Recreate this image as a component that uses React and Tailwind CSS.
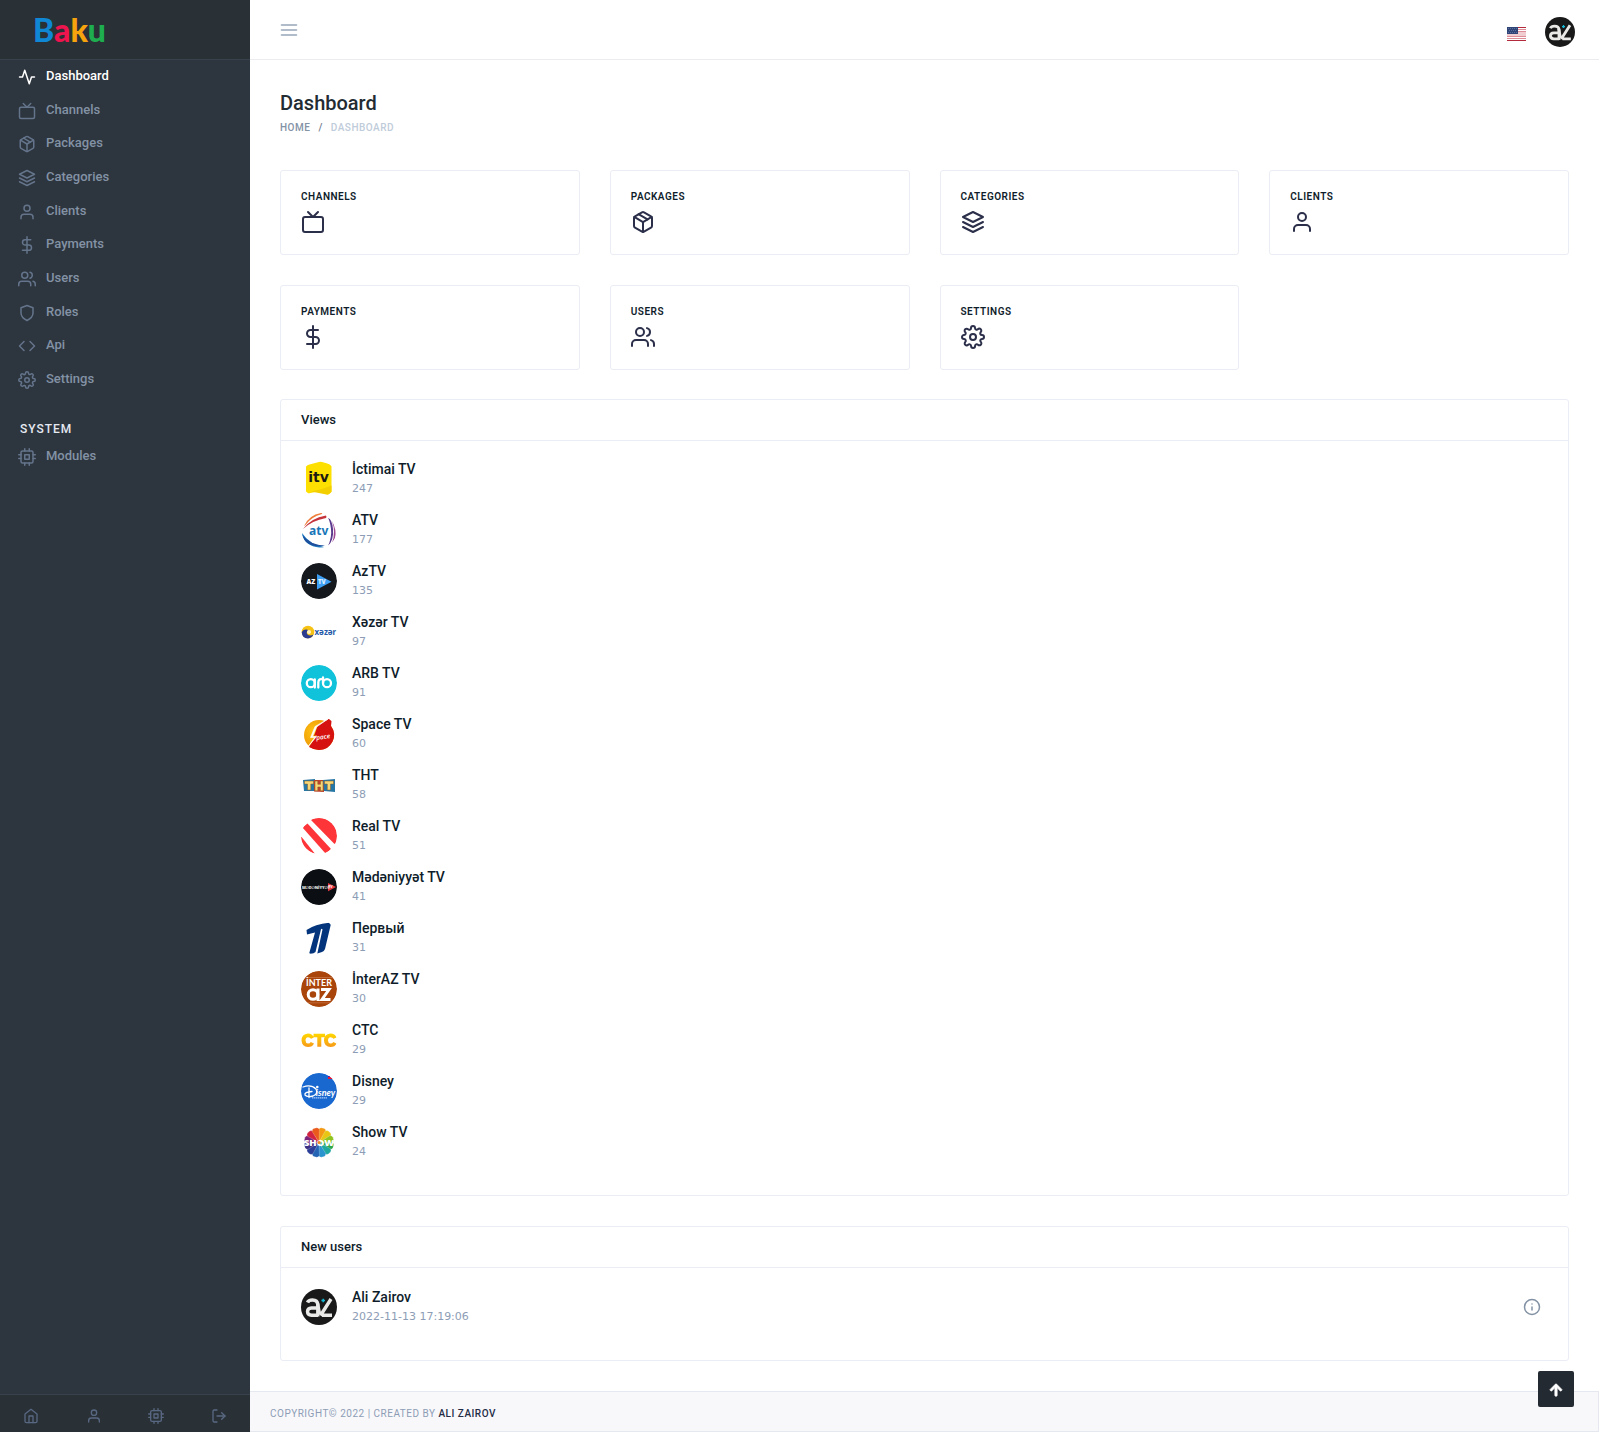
import React from "react";
import {
  FiActivity,
  FiTv,
  FiPackage,
  FiLayers,
  FiUser,
  FiDollarSign,
  FiUsers,
  FiShield,
  FiCode,
  FiSettings,
  FiCpu,
  FiHome,
  FiLogOut,
  FiMenu,
  FiInfo,
} from "react-icons/fi";
import { FaArrowUp } from "react-icons/fa";

const navItems = [
  { label: "Dashboard", icon: FiActivity, active: true },
  { label: "Channels", icon: FiTv },
  { label: "Packages", icon: FiPackage },
  { label: "Categories", icon: FiLayers },
  { label: "Clients", icon: FiUser },
  { label: "Payments", icon: FiDollarSign },
  { label: "Users", icon: FiUsers },
  { label: "Roles", icon: FiShield },
  { label: "Api", icon: FiCode },
  { label: "Settings", icon: FiSettings },
];

const quickLinks = [
  { label: "Home", icon: FiHome },
  { label: "Profile", icon: FiUser },
  { label: "Modules", icon: FiCpu },
  { label: "Log out", icon: FiLogOut },
];

const tiles = [
  { label: "Channels", icon: FiTv },
  { label: "Packages", icon: FiPackage },
  { label: "Categories", icon: FiLayers },
  { label: "Clients", icon: FiUser },
  { label: "Payments", icon: FiDollarSign },
  { label: "Users", icon: FiUsers },
  { label: "Settings", icon: FiSettings },
];

function Logo({ children }) {
  return (
    <svg viewBox="0 0 36 36" className="size-9 shrink-0 rounded-full" aria-hidden="true">
      {children}
    </svg>
  );
}

const ItvLogo = () => (
  <Logo>
    <path d="M5 5.500Q5 4.500 6.500 4L18 .9Q19.500 .6 21 1L29 3.300Q30.500 3.800 30.500 5.300V32Q30.500 34.500 28 34L17 30.500L7 32.500Q5 32.800 5 31Z" fill="#fde000" />
    <path d="M10 30.500Q20 29 30.500 24.500V32Q30.500 34.500 28 34Z" fill="#f3cf00" />
    <text x="17.500" y="21" textAnchor="middle" fontFamily="DejaVu Sans" fontWeight="700" fontSize="14" fill="#1c1a12">itv</text>
  </Logo>
);

const AtvLogo = () => (
  <Logo>
    <path d="M3 14Q8 3 20 1Q22 1 21 2Q10 5 4.500 13Z" fill="#ee7d3b" />
    <path d="M2 17Q10 6 25 3.500Q26 5 25 6Q11 8.500 2 17Z" fill="#c5343d" />
    <path d="M27 6Q31 7 32 17Q33 28 27 34Q31 25 30 17Q29 9 27 6Z" fill="#5b3a8e" />
    <path d="M31 9Q36 18 34 26Q32 30 31 31Q35 20 31 9Z" fill="#a14a94" />
    <path d="M1 21Q2 32 15 35Q22 36 23 35Q9 33 1 21Z" fill="#1f7fc4" />
    <path d="M1.500 23Q9 33 24 33.500Q12 36.500 4 29Z" fill="#1d4f9c" />
    <text x="17.700" y="22.500" textAnchor="middle" fontFamily="Noto Sans" fontWeight="700" fontSize="12" fill="#1976b8">atv</text>
  </Logo>
);

const AzTvLogo = () => (
  <Logo>
    <circle cx="18" cy="18" r="18" fill="#15181d" />
    <path d="M16 11L30.500 18.700L16 26.500Z" fill="#3da0f5" />
    <text x="5.500" y="21" fontFamily="Open Sans" fontWeight="800" fontSize="6.500" fill="#fff">AZ</text>
    <text x="17" y="21" fontFamily="Open Sans" fontWeight="800" fontSize="6" fill="#d9efff">TV</text>
  </Logo>
);

const XezerLogo = () => (
  <Logo>
    <circle cx="7" cy="18" r="6.300" fill="#f6c214" />
    <path d="M.7 18Q1 24.300 7 24.500Q11 24 12.500 20.500Q9 22.500 6.500 20.500Q4.500 18 7.500 16Q3 14.500 .7 18Z" fill="#2b3c90" />
    <circle cx="8" cy="18" r="2" fill="#fff3c4" />
    <text x="13.500" y="20.500" fontFamily="Noto Sans" fontWeight="700" fontSize="8" fill="#245aa8">xəzər</text>
  </Logo>
);

const ArbLogo = () => (
  <Logo>
    <circle cx="18" cy="18" r="18" fill="#10c3da" />
    <g fill="none" stroke="#fff" strokeWidth="2.300" strokeLinecap="round">
      <circle cx="9.800" cy="18.200" r="4" />
      <path d="M13.800 14.500V22.500M17.300 22.500V18Q17.300 14 20.300 14.200" />
      <circle cx="26" cy="18.200" r="4" />
      <path d="M22 18V12.500" />
    </g>
  </Logo>
);

const SpaceLogo = () => (
  <Logo>
    <defs>
      <radialGradient id="space-sun" cx=".35" cy=".4" r=".7">
        <stop offset="0" stopColor="#ffc715" />
        <stop offset="1" stopColor="#e98a00" />
      </radialGradient>
    </defs>
    <circle cx="18" cy="19" r="15" fill="url(#space-sun)" />
    <path d="M31 1L17 9L13 20L16 19L8 31Q13 34 18 34A15 15 0 0 0 30 10Z" fill="#d5120f" />
    <path d="M27 3L15.500 11L11.500 20.500H15.500L6 32L13.800 21.500H9.500L14 10.500Z" fill="#fff" stroke="#fff" strokeWidth=".6" />
    <text x="15.500" y="24" fontFamily="Open Sans" fontStyle="italic" fontWeight="600" fontSize="6.500" fill="#fff" transform="rotate(-8 16 24)">pace</text>
  </Logo>
);

const ThtLogo = () => (
  <Logo>
    <path d="M2 13L14 12V24L3 24Z" fill="#2677a5" />
    <path d="M13 13L23 13V25L13 24.500Z" fill="#c0432e" />
    <path d="M22 13L34 12V25L23 24Z" fill="#2677a5" />
    <g fill="#f5d778" stroke="#8a5a22" strokeWidth=".5">
      <path d="M3.500 14H12.500V17H9.800V23H6.500V17H3.500Z" />
      <path d="M14 14H16.800V17.300H19.500V14H22V23.800H19.500V20H16.800V23.800H14Z" />
      <path d="M23.500 14H32.500V17H29.500V23H26.300V17H23.500Z" />
    </g>
  </Logo>
);

const RealLogo = () => (
  <Logo>
    <defs>
      <clipPath id="real-disc"><circle cx="18" cy="18" r="18" /></clipPath>
    </defs>
    <g clipPath="url(#real-disc)" fill="#fd3438">
      <path d="M8 0H36V27L33 25.500L10 2Z" />
      <path d="M1.500 9.500L6.500 5.500L30 31L25 36Z" />
      <path d="M-1 17L15 37H-1Z" />
    </g>
  </Logo>
);

const MedeniyyetLogo = () => (
  <Logo>
    <circle cx="18" cy="18" r="18" fill="#0b0f14" />
    <path d="M27 14L35 18L27 22.200Z" fill="#e8383f" />
    <text x="1" y="19.500" fontFamily="Open Sans" fontWeight="800" fontSize="4" fill="#e6e6e6">MƏDƏNİYYƏT</text>
    <text x="27.300" y="19.200" fontFamily="Open Sans" fontWeight="700" fontSize="3.500" fill="#fff">TV</text>
  </Logo>
);

const PerviyLogo = () => (
  <Logo>
    <path d="M5.500 10Q14 4 28 2.700Q30 2.600 29.700 5L24 29Q23 31.500 21 32L16.300 33.500L21.500 9.500L20.800 8.800L20 9.300L14.500 32L12.500 33.300L8 34L14 12.500L6 14.500Z" fill="#04357c" />
  </Logo>
);

const InterAzLogo = () => (
  <Logo>
    <circle cx="18" cy="18" r="18" fill="#a9440a" />
    <path d="M4 6.500H32M5 31.800H31" stroke="#c97a4c" strokeWidth=".7" />
    <text x="18" y="14.500" textAnchor="middle" fontFamily="Lato" fontWeight="700" fontSize="9" fill="#fff">İNTER</text>
    <g fill="none" stroke="#fff" strokeWidth="3">
      <circle cx="12" cy="23.500" r="4.800" />
      <path d="M17 17.500V30M20 18.500H28L21 28.500H29.500" />
    </g>
  </Logo>
);

const CtcLogo = () => (
  <Logo>
    <defs>
      <linearGradient id="ctc-gold" x1="0" y1="0" x2="0" y2="1">
        <stop offset="0" stopColor="#ffd800" />
        <stop offset="1" stopColor="#f79a1a" />
      </linearGradient>
    </defs>
    <path fill="url(#ctc-gold)" d="M13 15.500Q11 11.500 7 11.500Q.5 12 .5 18.500Q.8 25 7 25Q11.500 25 13 21.500L9.800 20Q9 21.500 7 21.500Q4.500 21 4.500 18.500Q4.500 15.500 7 15.200Q9 15.200 10 16.800ZM12.500 11.800H24V15.300H20.300V24.700H16.300V15.300H12.500ZM35.500 15.500Q34 11.500 29.500 11.500Q23 12 23 18.500Q23.300 25 29.500 25Q34 25 35.500 21.500L32.300 20Q31.500 21.500 29.500 21.500Q27 21 27 18.500Q27 15.500 29.500 15.200Q31.500 15.200 32.500 16.800Z" />
  </Logo>
);

const DisneyLogo = () => (
  <Logo>
    <circle cx="18" cy="18" r="18" fill="#1968cf" />
    <path d="M27 3H30L32 6H27Z" fill="#f0142f" />
    <path d="M27 3H29V4H27Z" fill="#2b1fd6" />
    <path d="M2 14Q10 11 15 16Q17.500 21 12 23Q6 24.500 4 22Q3 19 11 18.500M8 15V24.500" fill="none" stroke="#fff" strokeWidth="1.300" strokeLinecap="round" />
    <circle cx="16.300" cy="14" r="1.300" fill="#fff" />
    <text x="14.800" y="22.500" fontFamily="Lato" fontStyle="italic" fontWeight="700" fontSize="9" fill="#fff">isney</text>
    <path d="M11 24.900H26" stroke="#cfe1ff" strokeWidth="1" strokeDasharray="1.500 .5" />
  </Logo>
);

const petals = [
  "#f39a12", "#e9c614", "#8fc31f", "#2fa84a", "#1ea8a0", "#2a94cf",
  "#2464b4", "#2b3f98", "#3c2f86", "#7a2379", "#d32340", "#ea5a1c",
];

const ShowLogo = () => (
  <Logo>
    {petals.map((color, i) => (
      <path
        key={color}
        d="M18 18.500L14.200 6Q14.800 4 16.500 3.700H19.500Q21.200 4 21.800 6Z"
        fill={color}
        stroke="#fff"
        strokeWidth=".2"
        transform={`rotate(${i * 30 + 15} 18 18.500)`}
      />
    ))}
    <text x="18" y="22" textAnchor="middle" fontFamily="Open Sans" fontWeight="800" fontSize="9.500" fill="#fff">SHOW</text>
    <circle cx="18" cy="18.500" r="1.500" fill="#f08a1c" />
  </Logo>
);

function ProfilePicture({ className }) {
  return (
    <svg viewBox="0 0 36 36" className={className} role="img" aria-label="Ali Zairov">
      <circle cx="18" cy="18" r="18" fill="#191919" />
      <g fill="none" stroke="#e9e9e7" strokeWidth="3.400">
        <path d="M6.500 13.500Q7.500 11 11.500 11Q16.500 11 16.800 15.500V27.500" />
        <path d="M17 19H10.500Q6.500 19.200 6.500 22.700Q6.600 26 10.500 26.200H17" />
        <path d="M30 10L19.500 26.500M21 26.300H31M16.500 14L18.500 25" />
      </g>
      <path d="M22.200 9.700V13.300M20.400 11.500H24" stroke="#14b9d6" strokeWidth="1.500" />
    </svg>
  );
}

function UsFlag() {
  return (
    <svg viewBox="0 0 19 14" className="h-3.5 w-[19px]" role="img" aria-label="English">
      <path fill="#fff" d="M0 0H19V14H0Z" />
      <path fill="#b22a3c" d="M11 0H19V1H11ZM0 13H19V14H0Z" />
      <path fill="#dd8e98" d="M11 2H19V3H11ZM11 4H19V5H11ZM0 9H19V10H0ZM0 11H19V12H0Z" />
      <path fill="#f0cdd1" d="M11 5H19V9H0V7H11Z" />
      <path fill="#2f4578" d="M0 0H11V7H0Z" />
      <path stroke="#5b6f9d" strokeWidth="1" strokeDasharray="1 1" d="M1 1.500H10M2 3.500H10M1 5.500H10" />
    </svg>
  );
}

const channels = [
  { name: "İctimai TV", views: 247, logo: ItvLogo },
  { name: "ATV", views: 177, logo: AtvLogo },
  { name: "AzTV", views: 135, logo: AzTvLogo },
  { name: "Xəzər TV", views: 97, logo: XezerLogo },
  { name: "ARB TV", views: 91, logo: ArbLogo },
  { name: "Space TV", views: 60, logo: SpaceLogo },
  { name: "ТНТ", views: 58, logo: ThtLogo },
  { name: "Real TV", views: 51, logo: RealLogo },
  { name: "Mədəniyyət TV", views: 41, logo: MedeniyyetLogo },
  { name: "Первый", views: 31, logo: PerviyLogo },
  { name: "İnterAZ TV", views: 30, logo: InterAzLogo },
  { name: "СТС", views: 29, logo: CtcLogo },
  { name: "Disney", views: 29, logo: DisneyLogo },
  { name: "Show TV", views: 24, logo: ShowLogo },
];

function NavLink({ label, icon: Icon, active }) {
  return (
    <a
      href="#"
      className={`flex items-center gap-2.5 pb-0.5 pl-[18px] text-[13px] leading-5 font-medium ${active ? "text-white" : "text-[#8392a5]"}`}
    >
      <Icon className={`mt-0.5 size-[18px] shrink-0 ${active ? "text-white" : "text-[#64748b]"}`} />
      {label}
    </a>
  );
}

function Sidebar() {
  return (
    <aside className="flex w-[250px] shrink-0 flex-col bg-[#2d353e]">
      <div className="flex h-[60px] items-center border-b border-[#37424c] bg-[#293036] pl-[33px]">
        <a href="#" className="font-[Lato,sans-serif] text-[32px] leading-10 font-black">
          <span className="text-[#0f87d4]">B</span>
          <span className="text-[#ee144e]">a</span>
          <span className="text-[#f7a30e]">k</span>
          <span className="text-[#1fae4f]">u</span>
        </a>
      </div>
      <nav aria-label="Main" className="flex grow flex-col">
        <ul className="grid h-[337px] grid-rows-10">
          {navItems.map((item) => (
            <li key={item.label} className="grid">
              <NavLink {...item} />
            </li>
          ))}
        </ul>
        <h2 className="mt-[22px] pl-5 text-xs leading-5 font-medium tracking-[1px] text-[#e5e9f2] uppercase">System</h2>
        <ul className="mt-[7px]">
          <li className="grid">
            <NavLink label="Modules" icon={FiCpu} />
          </li>
        </ul>
      </nav>
      <div className="grid h-[38px] grid-cols-4 border-t border-[#37424c] bg-[#293036]">
        {quickLinks.map(({ label, icon: Icon }) => (
          <a key={label} href="#" aria-label={label} className="flex items-center justify-center pt-1 text-[#596882]">
            <Icon className="size-4" />
          </a>
        ))}
      </div>
    </aside>
  );
}

function Panel({ title, className, children }) {
  return (
    <section className={`rounded-[3px] border border-[#ebedf5] pb-[35px] ${className}`}>
      <h2 className="border-b border-[#ebedf5] px-5 py-2.5 text-[13px] leading-5 font-medium text-[#0f1d2b]">{title}</h2>
      {children}
    </section>
  );
}

function Person({ name, detail, picture, action }) {
  return (
    <li className="flex items-center gap-[15px]">
      {picture}
      <div className="grow">
        <p className="text-sm leading-4 font-medium text-[#0f1d2b]">{name}</p>
        <p className="mt-1 font-['DejaVu_Sans',sans-serif] text-[11px] leading-4 text-[#8d9db5]">{detail}</p>
      </div>
      {action}
    </li>
  );
}

export default function App() {
  return (
    <div className="flex min-h-screen bg-white font-[Roboto,sans-serif] text-[#0f1d2b]">
      <Sidebar />
      <div className="flex min-w-0 grow flex-col">
        <header className="flex h-[60px] items-center border-b border-[#ebecf0] pr-6 pl-[29px]">
          <button type="button" aria-label="Toggle menu" className="text-[#97a7b8]">
            <FiMenu className="size-5" />
          </button>
          <button type="button" aria-label="Language" className="mt-2 ml-auto">
            <UsFlag />
          </button>
          <button type="button" aria-label="Account" className="mt-1 ml-[19px]">
            <ProfilePicture className="size-[30px]" />
          </button>
        </header>

        <main className="grow px-[30px] pt-[30px] pb-[30px]">
          <h1 className="text-xl leading-[26px] font-medium text-[#232b33]">Dashboard</h1>
          <nav aria-label="Breadcrumb" className="mt-1">
            <ol className="flex gap-2 text-[10px] leading-4 font-medium tracking-[.5px] uppercase">
              <li><a href="#" className="text-[#8392a5]">Home</a></li>
              <li aria-hidden="true" className="text-[#707b8c]">/</li>
              <li className="text-[#c0ccda]">Dashboard</li>
            </ol>
          </nav>

          <div className="mt-[34px] grid grid-cols-4 gap-[30px]">
            {tiles.map(({ label, icon: Icon }) => (
              <a key={label} href="#" className="rounded-[3px] border border-[#ebedf5] px-5 pt-[18px] pb-5">
                <h2 className="text-[10px] leading-4 font-semibold tracking-[.5px] uppercase">{label}</h2>
                <Icon className="mt-[5px] size-6 text-[#2b2f49]" />
              </a>
            ))}
          </div>

          <Panel title="Views" className="mt-[29px]">
            <ul className="flex flex-col gap-[15px] px-5 pt-5">
              {channels.map(({ name, views, logo: ChannelLogo }) => (
                <Person key={name} name={name} detail={views} picture={<ChannelLogo />} />
              ))}
            </ul>
          </Panel>

          <Panel title="New users" className="mt-[30px]">
            <ul className="px-5 pt-[21px]">
              <Person
                name="Ali Zairov"
                detail="2022-11-13 17:19:06"
                picture={<ProfilePicture className="size-9 shrink-0" />}
                action={
                  <a href="#" aria-label="User details" className="mr-[7px] text-[#8392a5]">
                    <FiInfo className="size-[18px]" />
                  </a>
                }
              />
            </ul>
          </Panel>
        </main>

        <footer className="border border-l-0 border-[#e5e8ef] bg-[#f8f8fb] px-5 pt-3.5 pb-2.5 text-[10px] leading-[15px] tracking-[.5px] text-[#8d9db5] uppercase">
          Copyright© 2022 | Created by{" "}
          <a href="#" className="font-medium text-[#232b45]">Ali Zairov</a>
        </footer>
      </div>

      <button
        type="button"
        aria-label="Back to top"
        className="fixed right-[25px] bottom-[25px] flex size-9 items-center justify-center rounded-xs bg-[#232a31] text-white"
      >
        <FaArrowUp className="mt-0.5 size-3.5" stroke="currentColor" strokeWidth="30" />
      </button>
    </div>
  );
}
